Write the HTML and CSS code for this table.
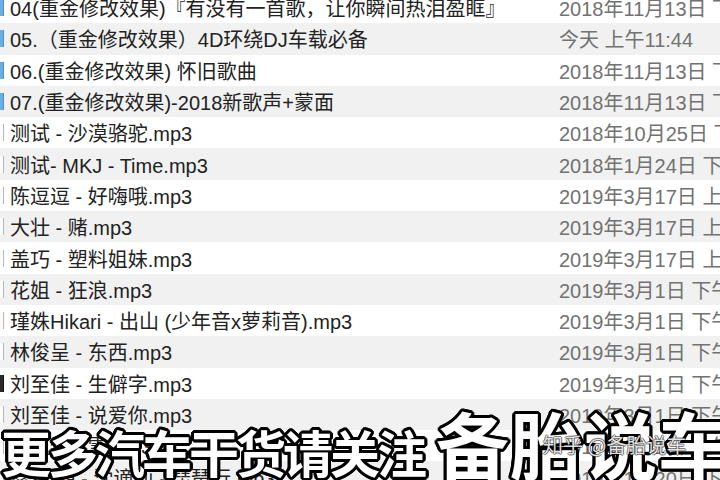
FILE: index.html
```html
<!DOCTYPE html>
<html lang="zh-CN">
<head>
<meta charset="utf-8">
<title>Finder list</title>
<link rel="stylesheet" href="styles.css">
</head>
<body>
<div class="screen">
  <div class="list">
    <div class="row"><span class="icon icon-blue"></span><span class="name">04(重金修改效果)『有没有一首歌，让你瞬间热泪盈眶』</span><span class="date">2018年11月13日 下午</span></div>
    <div class="row"><span class="icon icon-blue"></span><span class="name">05.（重金修改效果）4D环绕DJ车载必备</span><span class="date">今天 上午11:44</span></div>
    <div class="row"><span class="icon icon-blue"></span><span class="name">06.(重金修改效果) 怀旧歌曲</span><span class="date">2018年11月13日 下午</span></div>
    <div class="row"><span class="icon icon-blue"></span><span class="name">07.(重金修改效果)-2018新歌声+蒙面</span><span class="date">2018年11月13日 下午</span></div>
    <div class="row"><span class="icon icon-doc"></span><span class="name">测试 - 沙漠骆驼.mp3</span><span class="date">2018年10月25日 下午</span></div>
    <div class="row"><span class="icon icon-doc"></span><span class="name">测试- MKJ - Time.mp3</span><span class="date">2018年1月24日 下午</span></div>
    <div class="row"><span class="icon icon-doc"></span><span class="name">陈逗逗 - 好嗨哦.mp3</span><span class="date">2019年3月17日 上午</span></div>
    <div class="row"><span class="icon icon-doc"></span><span class="name">大壮 - 赌.mp3</span><span class="date">2019年3月17日 上午</span></div>
    <div class="row"><span class="icon icon-doc"></span><span class="name">盖巧 - 塑料姐妹.mp3</span><span class="date">2019年3月17日 上午</span></div>
    <div class="row"><span class="icon icon-doc"></span><span class="name">花姐 - 狂浪.mp3</span><span class="date">2019年3月1日 下午</span></div>
    <div class="row"><span class="icon icon-doc"></span><span class="name">瑾姝Hikari - 出山 (少年音x萝莉音).mp3</span><span class="date">2019年3月1日 下午</span></div>
    <div class="row"><span class="icon icon-doc"></span><span class="name">林俊呈 - 东西.mp3</span><span class="date">2019年3月1日 下午</span></div>
    <div class="row"><span class="icon icon-dark"></span><span class="name">刘至佳 - 生僻字.mp3</span><span class="date">2019年3月1日 下午</span></div>
    <div class="row"><span class="icon icon-doc"></span><span class="name">刘至佳 - 说爱你.mp3</span><span class="date">2019年3月1日 下午</span></div>
    <div class="row"><span class="icon icon-doc"></span><span class="name">刘至佳 - 雪.mp3</span><span class="date">2019年3月1日 上午</span></div>
    <div class="row"><span class="icon icon-doc"></span><span class="name">鑫然iya - 沈谪仙 - 琵琶行.mp3</span><span class="date">2019年1月20日 下午</span></div>
  </div>

  <div class="caption">
    <span class="cap-small">更多汽车干货请关注</span>
    <span class="cap-big">备胎说车</span>
  </div>
  <div class="watermark">知乎 @备胎说车</div>
</div>
</body>
</html>
```

FILE: styles.css
```css
html, body {
  margin: 0;
  padding: 0;
  background: #ffffff;
}

.screen {
  position: relative;
  width: 720px;
  height: 480px;
  overflow: hidden;
  background: #ffffff;
  font-family: "Liberation Sans", "Noto Sans CJK SC", sans-serif;
}

.list {
  display: flex;
  flex-direction: column;
  margin-top: -8px;
}

.row {
  display: flex;
  align-items: center;
  height: 31.3px;
  flex: none;
  white-space: nowrap;
  font-size: 20px;
}

.row:nth-child(even) {
  background: #f1f1f1;
}

.icon {
  flex: none;
  width: 4px;
  height: 17px;
  margin-right: 6px;
  box-sizing: border-box;
}

.icon-blue {
  background: #6aaee6;
  border-right: 1px solid #4d8fcf;
}

.icon-doc {
  background: #fbfbfb;
  border-right: 1px solid #b8b8b8;
}

.icon-dark {
  background: #2a2a2a;
  border-right: 1px solid #111;
}

.name {
  flex: none;
  width: 549px;
  color: #222222;
}

.date {
  flex: none;
  color: #727272;
}

.caption {
  position: absolute;
  left: 1px;
  bottom: 3px;
  display: flex;
  align-items: flex-end;
  gap: 12px;
  font-family: "Noto Sans CJK SC", sans-serif;
  font-weight: 700;
  color: #ffffff;
  line-height: 1;
  white-space: nowrap;
  text-shadow:
    3px 0 0 #000, -3px 0 0 #000, 0 3px 0 #000, 0 -3px 0 #000,
    2px 2px 0 #000, -2px 2px 0 #000, 2px -2px 0 #000, -2px -2px 0 #000,
    3px 1px 0 #000, -3px 1px 0 #000, 3px -1px 0 #000, -3px -1px 0 #000,
    1px 3px 0 #000, -1px 3px 0 #000, 1px -3px 0 #000, -1px -3px 0 #000;
}

.cap-small {
  font-size: 50px;
  letter-spacing: -3px;
  padding-bottom: 1px;
}

.cap-big {
  font-size: 73px;
  letter-spacing: 1px;
  margin-bottom: -2px;
}

.watermark {
  position: absolute;
  left: 543px;
  top: 435px;
  font-family: "Noto Sans CJK SC", sans-serif;
  font-size: 20px;
  line-height: 1;
  color: rgba(255, 255, 255, 0.88);
  white-space: nowrap;
  text-shadow:
    1px 0 0 rgba(0,0,0,0.5), -1px 0 0 rgba(0,0,0,0.5),
    0 1px 0 rgba(0,0,0,0.5), 0 -1px 0 rgba(0,0,0,0.5);
}
```
